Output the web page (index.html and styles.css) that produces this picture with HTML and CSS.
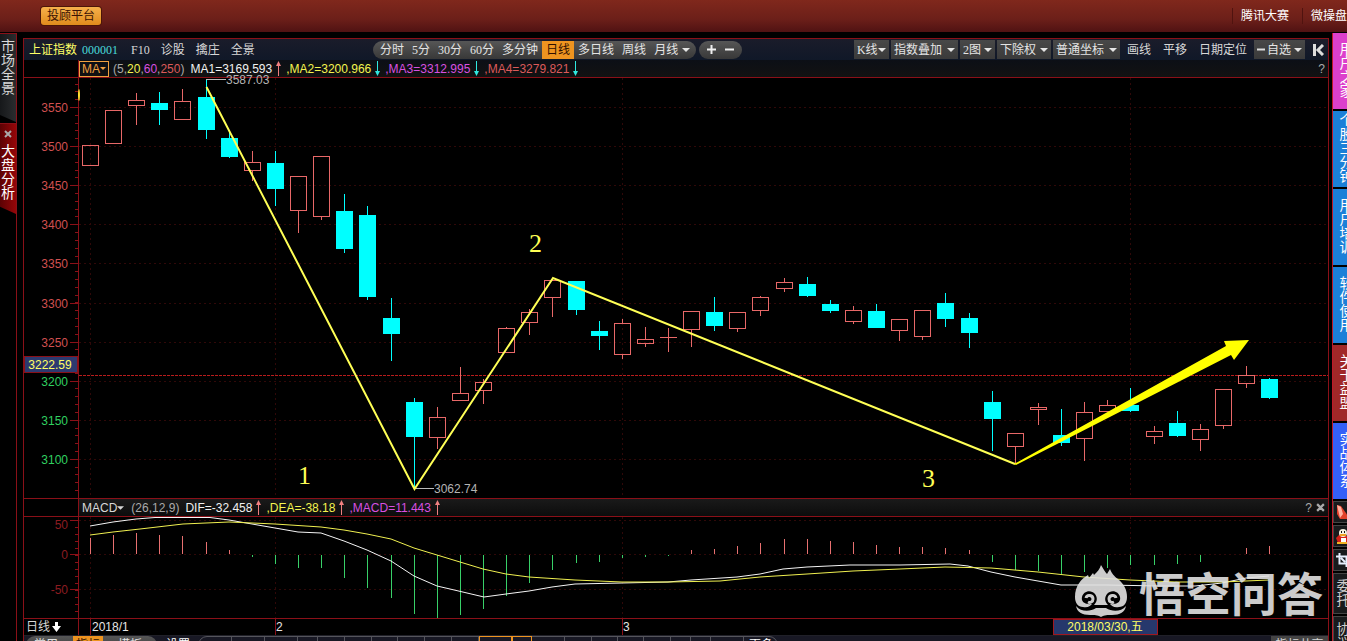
FILE: index.html
```html
<!DOCTYPE html>
<html lang="zh-CN">
<head>
<meta charset="utf-8">
<title>上证指数 000001</title>
<link rel="stylesheet" href="styles.css">
</head>
<body>
<svg class="defs" aria-hidden="true">
  <symbol id="caret" viewBox="0 0 8 4"><path d="M0 0h8L4 4z" fill="currentColor"/></symbol>
  <symbol id="up" viewBox="0 0 5 15"><path d="M2 5h1v10h-1zM2.500 0L5 5H0z" fill="currentColor"/></symbol>
  <symbol id="down" viewBox="0 0 5 15"><path d="M2 0h1v10h-1zM2.500 15L0 10H5z" fill="currentColor"/></symbol>
  <symbol id="cross" viewBox="0 0 8 8"><path d="M1 1l6 6M7 1L1 7" stroke="currentColor" stroke-width="2"/></symbol>
</svg>

<header class="top">
  <button class="advisor">投顾平台</button>
  <nav class="top-links">
    <a href="#">腾讯大赛</a>
    <a href="#">微操盘</a>
  </nav>
</header>

<div class="work">
  <nav class="left-tabs">
    <button class="ltab">市场全景</button>
    <button class="ltab current"><svg width="8" height="8"><use href="#cross"/></svg>大盘分析</button>
  </nav>

  <main class="panel">
    <div class="toolbar">
      <div class="stock">
        <strong class="name">上证指数</strong>
        <span class="code">000001</span>
        <a href="#">F10</a>
        <a href="#">诊股</a>
        <a href="#">擒庄</a>
        <a href="#">全景</a>
      </div>
      <div class="pill periods">
        <button>分时</button><button>5分</button><button>30分</button><button>60分</button><button>多分钟</button><button class="on">日线</button><button>多日线</button><button>周线</button><button>月线</button>
        <svg width="8" height="4"><use href="#caret"/></svg>
      </div>
      <div class="pill zoom">
        <button aria-label="放大"><svg width="9" height="9"><path d="M0 4.500h9M4.500 0v9" stroke="#eee" stroke-width="2"/></svg></button>
        <button aria-label="缩小"><svg width="9" height="9"><path d="M0 4.500h9" stroke="#eee" stroke-width="2"/></svg></button>
      </div>
      <div class="tools">
        <label class="drop"><select aria-label="K线"><option>K线</option></select><svg width="8" height="4"><use href="#caret"/></svg></label>
        <label class="drop c4"><select aria-label="指数叠加"><option>指数叠加</option></select><svg width="8" height="4"><use href="#caret"/></svg></label>
        <label class="drop"><select aria-label="图数"><option>2图</option></select><svg width="8" height="4"><use href="#caret"/></svg></label>
        <label class="drop c3"><select aria-label="除权"><option>下除权</option></select><svg width="8" height="4"><use href="#caret"/></svg></label>
        <label class="drop c4"><select aria-label="坐标"><option>普通坐标</option></select><svg width="8" height="4"><use href="#caret"/></svg></label>
        <button class="plain">画线</button>
        <button class="plain">平移</button>
        <button class="plain">日期定位</button>
        <label class="drop last"><svg width="8" height="3"><path d="M0 1.500h8" stroke="#ddd" stroke-width="2"/></svg><select aria-label="自选"><option>自选</option></select><svg width="8" height="4"><use href="#caret"/></svg></label>
        <button class="collapse" aria-label="收起"><svg width="11" height="12"><path d="M1.500 0v12M10 1L5 6l5 5" fill="none" stroke="#ddd" stroke-width="3"/></svg></button>
      </div>
    </div>

    <div class="legend">
      <div class="gutter"></div>
      <button class="ma">MA<svg width="6" height="3"><use href="#caret"/></svg></button>
      <span class="params">(<i>5</i>,<i class="yellow">20</i>,<i class="purple">60</i>,<i class="red">250</i>)</span>
      <span class="white">MA1=3169.593</span><svg class="rise" width="5" height="15"><use href="#up"/></svg>
      <span class="yellow">,MA2=3200.966</span><svg class="fall" width="5" height="15"><use href="#down"/></svg>
      <span class="purple">,MA3=3312.995</span><svg class="fall" width="5" height="15"><use href="#down"/></svg>
      <span class="red">,MA4=3279.821</span><svg class="fall" width="5" height="15"><use href="#down"/></svg>
      <div class="ends"><button class="help">?</button></div>
    </div>

    <svg class="chart open" id="price" viewBox="24 78 1304 420" role="img" aria-label="日K线"></svg>

    <div class="legend macd">
      <div class="gutter"></div>
      <button class="ind">MACD<svg width="7" height="4"><use href="#caret"/></svg></button>
      <span class="params">(26,12,9)</span>
      <span class="white">DIF=-32.458</span><svg class="rise" width="5" height="15"><use href="#up"/></svg>
      <span class="yellow">,DEA=-38.18</span><svg class="rise" width="5" height="15"><use href="#up"/></svg>
      <span class="purple">,MACD=11.443</span><svg class="rise" width="5" height="15"><use href="#up"/></svg>
      <div class="ends"><button class="help">?</button><button class="help" aria-label="关闭"><svg width="9" height="9"><use href="#cross"/></svg></button></div>
    </div>

    <div class="lower">
      <svg class="chart" id="macd" viewBox="24 517 1304 101" role="img" aria-label="MACD"></svg>
      <div class="mark">
        <svg width="56" height="54" viewBox="0 0 56 54">
          <path d="M2 33C2 22 8 15 15 11l1 3 4-5 1 2C24 8 27 5 28 1c2 3 4 7 6 9l3-5c2 5 4 7 8 10 6 5 9 11 9 18 0 6-3 10-8 10-5 1-7-1-9-3 8 1 11-3 10-7-1-6-9-8-13-3-3 4-2 8 1 11h-14c3-3 4-7 1-11-4-5-12-3-13 3-1 4 2 8 10 7-2 2-4 4-9 3-5 0-8-4-8-10z" fill="#e2e2e2"/>
          <path d="M3 42c5 6 14 6 20 2h10c6 4 15 4 20-2-1 6-6 9-14 9-5 0-7 0-11 2-4-2-6-2-11-2-8 0-13-3-14-9z" fill="#e2e2e2"/>
          <path d="M13 34c1-4 7-3 7 1 0 3-3 4-5 3M43 34c-1-4-7-3-7 1 0 3 3 4 5 3" fill="none" stroke="#e2e2e2" stroke-width="3"/>
        </svg>
        <span>悟空问答</span>
      </div>
    </div>

    <div class="dates">
      <button class="cycle">日线<svg width="9" height="10"><path d="M3 0h3v4h3L4.500 10 0 4h3z" fill="#fff"/></svg></button>
      <svg class="chart" viewBox="78 619 1250 16">
        <path d="M78.500 619v16M90.500 619v16M275.500 619v16M622.500 619v16" stroke="#8a1018"/>
        <g class="t12" fill="#e6e6e6"><text x="92" y="631">2018/1</text><text x="276" y="631">2</text><text x="623" y="631">3</text></g>
        <rect x="1053.500" y="619.500" width="104" height="15" fill="#26386c" stroke="#a01820"/>
        <text class="t12" x="1105" y="631" text-anchor="middle" fill="#ffff66">2018/03/30,五</text>
      </svg>
    </div>

    <div class="bottom">
      <div class="pill modes"><button>常用</button><button class="on">指标</button><button>模板</button></div>
      <button class="plain">设置</button>
      <div class="slots" id="slots"><button>更多</button></div>
      <button class="share">指标共享</button>
    </div>
  </main>

  <aside class="rail">
    <button class="pink">用户之家</button>
    <button>个股三分钟</button>
    <button>用户培训</button>
    <button>软件使用</button>
    <button class="brick">关于益盟</button>
    <button class="royal">实战体系</button>
    <button class="tool" aria-label="画笔"><svg width="12" height="16"><path d="M1 1l4 1 7 10v3H4L1 10z" fill="#e0402a"/><path d="M1 1l4 2 2 7-3 4z" fill="#ffb0a0"/></svg></button>
    <button class="tool" aria-label="QQ"><svg width="12" height="16"><path d="M0 10l3-3 8 1 1 7H2z" fill="#d62018"/><ellipse cx="7" cy="5" rx="4" ry="4" fill="#f4f0e0"/><path d="M5 3h1v2h-1zM8 3h1v2h-1z" fill="#111"/><path d="M4 6h6v2H4z" fill="#f0a020"/><path d="M5 10h5v4H5z" fill="#fff"/><path d="M1 14h11v2H1z" fill="#f0b020"/></svg></button>
    <button class="tool" aria-label="截图"><svg width="12" height="14"><path d="M0 3.500h12M3.500 0v10.500H12M10.500 3v11M5 5l4 4" fill="none" stroke="#e8f0ff" stroke-width="2"/></svg></button>
    <button class="tool tall">委托</button>
    <button class="tool tall">协议</button>
  </aside>
</div>
<script src="chart.js"></script>
</body>
</html>
```

FILE: styles.css
```css
* { box-sizing: border-box; }
body {
  margin: 0;
  height: 100vh;
  display: flex;
  flex-direction: column;
  overflow: hidden;
  background: #000;
  color: #d8d8d8;
  font: 12px/16px "Liberation Serif", "Noto Sans CJK SC", serif;
}
button, select {
  appearance: none;
  margin: 0;
  padding: 0;
  border: 0;
  background: none;
  color: inherit;
  font: inherit;
  white-space: nowrap;
}
a { color: inherit; text-decoration: none; }
i { font-style: normal; }
svg { display: block; flex: none; }
.defs { position: absolute; width: 0; height: 0; }

.top {
  flex: none;
  height: 32px;
  display: flex;
  align-items: center;
  padding-left: 41px;
  background: linear-gradient(#80281c, #6c1f19 60%, #501213);
}
.advisor {
  height: 18px;
  padding: 0 6px;
  border-radius: 3px;
  background: linear-gradient(#f6b04c, #e08c1c);
  color: #3a1204;
  box-shadow: 0 0 0 1px #4c1508;
}
.top-links { margin-left: auto; display: flex; color: #fff; white-space: nowrap; }
.top-links a { padding-left: 8px; border-left: 1px solid #50130f; }
.top-links a + a { margin-left: 13px; }

.work { flex: 1; min-height: 0; display: flex; padding-top: 1px; }

.left-tabs {
  flex: none;
  width: 17px;
  margin-right: 6px;
  border-right: 1px solid #8a1018;
}
.ltab {
  display: flex;
  flex-direction: column;
  align-items: center;
  width: 16px;
  height: 89px;
  padding: 6px 1px 0;
  background: linear-gradient(90deg, #16181a, #2a2c2e);
  border-top: 1px solid #8a1018;
  clip-path: polygon(0 0, 100% 0, 100% 100%, 0 92%);
  font-size: 14px;
  line-height: 14px;
  white-space: normal;
  word-break: break-all;
}
.ltab.current {
  height: 91px;
  margin-top: 1px;
  padding-top: 6px;
  gap: 7px;
  background: linear-gradient(90deg, #5c0204, #960608);
  color: #fff;
}
.ltab svg { color: #aaa; }

.panel {
  flex: 1;
  min-width: 0;
  margin-top: 5px;
  border: 1px solid #8a1018;
  border-bottom: 0;
}
.toolbar {
  display: flex;
  align-items: center;
  height: 21px;
  background: linear-gradient(#1a1c2a, #101828);
  white-space: nowrap;
}
.stock { flex: 0 0 349px; display: flex; gap: 11px; padding-left: 5px; }
.name { font-weight: 400; color: #ffff66; margin-right: -6px; }
.code { color: #4adcdc; margin-right: 2px; }
.pill {
  display: flex;
  align-items: center;
  height: 18px;
  border-radius: 9px;
  background: linear-gradient(#565656, #383838);
  color: #e4e4e4;
}
.periods { padding: 0 6px 0 3px; }
.periods button { height: 18px; padding: 0 4px; }
.periods .on, .modes .on { background: #ee9420; color: #301000; }
.zoom { margin-left: 3px; width: 43px; justify-content: space-evenly; }
.tools { margin-left: auto; display: flex; align-items: center; gap: 2px; padding-right: 4px; }
.drop {
  display: flex;
  align-items: center;
  justify-content: space-between;
  width: 35px;
  height: 19px;
  padding: 0 3px;
  background: linear-gradient(#484848, #3a3a3a);
  color: #e4e4e4;
}
.drop.c3 { width: 54px; }
.drop.c4 { width: 67px; }
.drop.last { width: 51px; }
.plain { padding: 0 5px; }
.collapse { margin-left: 6px; }

.legend {
  display: flex;
  align-items: center;
  height: 18px;
  border-bottom: 1px solid #8a1018;
  background: linear-gradient(#0c0f16, #121212);
  font-family: "Liberation Sans", "Noto Sans CJK SC", sans-serif;
  white-space: nowrap;
}
.legend.macd { height: 19px; border-top: 1px solid #8a1018; background: linear-gradient(#1a1a1a, #0c0c0c); }
.gutter { flex: none; width: 55px; height: 100%; border-right: 1px solid #8a1018; background: #000; }
.legend svg { margin: 0 5px 0 4px; }
.legend button svg { margin: 0; }
.params { margin: 0 6px 0 4px; color: #aaa; }
.macd .params { margin-left: 7px; }
.ma {
  display: flex;
  align-items: center;
  height: 16px;
  padding: 0 2px;
  border: 1px solid #f0a040;
  color: #f0a040;
}
.ind { display: flex; align-items: center; padding-left: 3px; }
.white { color: #f0f0f0; }
.yellow { color: #f4f450; }
.purple { color: #d850e0; }
.red { color: #dc5a5a; }
.rise { color: #f08080; }
.fall { color: #30e8e0; }
.ends { margin-left: auto; display: flex; align-items: center; gap: 4px; padding-right: 3px; }
.help { color: #aaa; }

.chart { width: 100%; height: auto; }
.open { overflow: visible; }
.t12 { font: 12px "Liberation Sans", "Noto Sans CJK SC", sans-serif; }
.wave { font: 26px "Liberation Serif", serif; fill: #ffff55; }

.lower { position: relative; border-bottom: 1px solid #8a1018; }
.mark {
  position: absolute;
  right: 5px;
  bottom: 0;
  display: flex;
  align-items: center;
  gap: 10px;
  opacity: .9;
  color: #e2e2e2;
  font: 700 46px/52px "Noto Sans CJK SC", sans-serif;
}

.dates { display: flex; }
.cycle { flex: none; width: 54px; height: 16px; display: flex; align-items: center; gap: 2px; padding-left: 2px; }
.dates .chart { flex: 1; min-width: 0; }

.bottom {
  display: flex;
  align-items: flex-start;
  height: 22px;
  padding-left: 2px;
  background: #181824;
  border-top: 1px solid #202028;
}
.modes { width: 131px; padding: 0 12px 0 5px; justify-content: space-between; flex: none; }
.modes button { padding: 0 3px; height: 18px; }
.bottom .plain { flex: none; width: 41px; height: 18px; padding: 0 0 0 9px; text-align: left; color: #fff; }
.slots {
  display: flex;
  height: 18px;
  width: 580px;
  border: 1px solid #55555c;
  border-radius: 12px;
}
.slots span { border-right: 1px solid #55555c; }
.slots .hot { border: 1px solid #ee9420; margin-top: -1px; }
.slots button { padding-left: 5px; color: #fff; }
.share { margin-left: auto; height: 18px; width: 57px; background: #444; }

.rail {
  flex: none;
  width: 15px;
  margin-left: 3px;
  border-left: 1px solid #c01828;
  overflow: hidden;
}
.rail button {
  display: flex;
  align-items: center;
  justify-content: center;
  width: 27px;
  height: 76px;
  margin-bottom: 2px;
  padding: 0 6px;
  background: #1c80d8;
  color: #fff;
  font-size: 14px;
  line-height: 14px;
  white-space: normal;
  word-break: break-all;
}
.rail .pink { background: #dc40cc; }
.rail .brick { background: #a02828; }
.rail .royal { background: #3460f8; }
.rail .tool {
  height: 22px;
  justify-content: flex-start;
  padding-left: 2px;
  background: #181a1c;
  border: 1px solid #444;
  color: #ccc;
}
.rail .tall { height: 41px; padding-right: 8px; }
```

FILE: chart.js
```js
const X0 = 90, STEP = 23.12;
const xAt = i => Math.round(X0 + i * STEP);

// [rising, high, body top, body bottom, low]
const candles = [
  [1,145,145,165,165],[1,110,110,143,143],[1,93,100,105,125],[0,92,103,110,125],[1,89,101,119,119],
  [0,79,97,130,139],[0,132,138,157,158],[1,151,162,170,181],[0,151,163,189,206],[1,176,176,210,233],
  [1,156,156,216,220],[0,194,211,249,253],[0,206,215,297,300],[0,298,318,334,361],[0,398,402,437,488],
  [1,407,417,437,449],[1,367,393,400,400],[1,379,382,390,404],[1,327,328,352,353],[1,309,312,322,335],
  [1,280,280,297,317],[0,281,281,310,315],[0,321,331,336,350],[1,319,323,354,359],[1,327,339,343,347],
  [1,328,337,337,352],[1,311,311,329,347],[0,297,312,326,331],[1,312,312,328,332],[1,296,297,310,316],
  [1,278,282,288,292],[0,277,284,296,297],[0,300,304,311,313],[1,306,310,321,324],[0,304,311,328,328],
  [1,319,319,330,341],[1,310,310,336,340],[0,293,303,319,327],[0,313,318,333,348],[0,391,402,419,451],
  [1,433,433,446,464],[1,403,407,409,425],[0,409,435,443,446],[1,402,412,438,461],[1,400,405,411,411],
  [0,388,405,411,412],[1,426,431,436,444],[0,411,423,436,437],[1,424,429,439,451],[1,389,389,425,429],
  [1,366,375,383,388],[0,378,379,398,399]
];
const bars = [538,535,533,535,536,542,550,557,564,568,568,578,588,598,614,618,615,609,596,583,570,563,562,558,557,556,
  550,549,546,543,539,539,541,542,545,547,547,548,550,562,570,571,574,572,568,565,565,564,562,554,548,546];

const RED = '#e86868', CYAN = '#00ffff', AXIS = '#8a1018', GRID = '#300808';
const line = (x1, y1, x2, y2, c, extra = '') =>
  `<path d="M${x1} ${y1}L${x2} ${y2}" stroke="${c}" ${extra}/>`;
const months = [90.5, 275.5, 622.5, 1130.5];
const dash = 'stroke-dasharray="2 3"';

let s = '';
for (let i = 0; i < 10; i++) {
  const y = Math.round(107 + i * 39.1) + 0.5;
  s += line(79, y, 1328, y, GRID, dash) + line(70, y, 78, y, AXIS);
  s += `<text class="t12" x="68" y="${y + 4}" text-anchor="end" fill="${i < 7 ? '#d05050' : '#30d060'}">${3550 - i * 50}</text>`;
}
for (let y = 83.5; y < 497; y += 7.82) s += line(75, Math.round(y) + 0.5, 78, Math.round(y) + 0.5, AXIS);
months.forEach(x => s += line(x, 78, x, 498, GRID, dash));
s += line(78.5, 78, 78.5, 498, AXIS);
s += line(79, 375.5, 1328, 375.5, '#b81c1c', 'stroke-dasharray="3 1"');
s += '<ellipse cx="79" cy="95" rx="1" ry="6" fill="#ffe030"/>';
s += '<rect x="24.500" y="356.500" width="53" height="16" fill="#2c3a70" stroke="#8a1018"/><text class="t12" x="50" y="369" text-anchor="middle" fill="#ffff66">3222.59</text>';
candles.forEach(([up, h, t, b, l], i) => {
  const x = xAt(i), c = up ? RED : CYAN;
  if (h < t) s += line(x + 0.5, h, x + 0.5, t, c);
  if (l > b) s += line(x + 0.5, b, x + 0.5, l, c);
  if (t === b) s += line(x - 8, t + 0.5, x + 9, t + 0.5, c);
  else s += up
    ? `<rect x="${x - 7.5}" y="${t + 0.5}" width="16" height="${b - t}" fill="none" stroke="${c}"/>`
    : `<rect x="${x - 8}" y="${t}" width="17" height="${b - t}" fill="${c}"/>`;
});
s += line(206, 79.5, 226, 79.5, '#bbb') + line(415, 488.5, 434, 488.5, '#bbb');
s += '<g class="t12" fill="#b4b4b4"><text x="226" y="84">3587.03</text><text x="434" y="493">3062.74</text></g>';
s += '<polyline points="206.5,87 414.5,489 553,278 1015,464" fill="none" stroke="#ffff55" stroke-width="2"/>';
s += '<polygon points="1014,464 1226,346 1224,341 1249,340 1234,360 1231,355 1016,465" fill="#ffff00"/>';
s += '<g class="wave"><text x="298" y="484">1</text><text x="529" y="252">2</text><text x="922" y="487">3</text></g>';
document.getElementById('price').innerHTML = s;

let m = '';
[[520.5, 50, 529], [554.5, 0, 559], [589.5, -50, 594]].forEach(([y, v, ty]) => {
  m += line(79, y, 1328, y, GRID, dash) + line(70, y, 78, y, AXIS);
  m += `<text class="t12" x="68" y="${ty}" text-anchor="end" fill="#8c1c20">${v}</text>`;
});
for (let y = 527; y < 617; y += 7) m += line(75, y + 0.5, 78, y + 0.5, AXIS);
months.forEach(x => m += line(x, 517, x, 618, GRID, dash));
m += line(78.5, 517, 78.5, 618, AXIS);
bars.forEach((v, i) => {
  if (v !== 554) m += line(xAt(i) + 0.5, v < 554 ? 554 : 555, xAt(i) + 0.5, v, v < 554 ? '#e87070' : '#38d068');
});
m += '<polyline fill="none" stroke="#f4f4f4" points="90,526 113,522 136,519 155,517.5 210,517.5 229,520 252,524 275,528 298,532 321,533 344,541 367,550 391,561 414,576 437,586 450,589 484,597 506,594 529,591 552,587 575,584 622,583 668,582 691,580 737,577 760,574 783,569 807,567 850,565 900,565 950,564 968,566 991,572 1015,577 1061,585 1107,585 1160,586 1195,586 1222,583 1246,578 1269,576"/>';
m += '<polyline fill="none" stroke="#f0f050" points="90,535 113,532 140,529 183,524 229,522 275,524 321,527 344,530 367,534 391,539 414,548 437,555 460,562 483,569 506,574 529,577 575,580 622,582 668,582 720,581 760,577 807,574 853,571 900,569 945,567 991,568 1038,572 1084,577 1130,580 1176,582 1222,582 1269,580"/>';
document.getElementById('macd').innerHTML = m;

const slots = document.getElementById('slots');
const more = slots.querySelector('button');
[33, 33, 33, 20, 27, 27, 26, 27, 27, 27, 33, 20, 33, 27, 26, 26, 27, 20, 20, 33].forEach((w, i) => {
  const el = document.createElement('span');
  el.style.width = w + 'px';
  if (i === 10 || i === 11) el.className = 'hot';
  slots.insertBefore(el, more);
});
```
